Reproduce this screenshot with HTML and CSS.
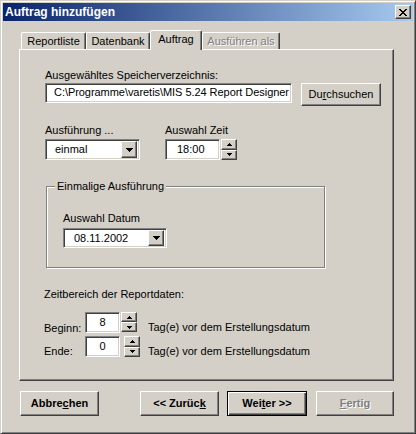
FILE: index.html
```html
<!DOCTYPE html>
<html>
<head>
<meta charset="utf-8">
<link rel="stylesheet" href="styles.css">
</head>
<body>
<div class="window">
  <div class="titlebar">
    <span class="title">Auftrag hinzufügen</span>
    <div class="close raised"><svg width="8" height="7" viewBox="0 0 8 7"><path d="M0 0h2v1h-2zM6 0h2v1h-2zM1 1h2v1h-2zM5 1h2v1h-2zM2 2h4v1h-4zM3 3h2v1h-2zM2 4h4v1h-4zM1 5h2v1h-2zM5 5h2v1h-2zM0 6h2v1h-2zM6 6h2v1h-2z" fill="#000"/></svg></div>
  </div>
  <div class="client">
    <div class="tabs">
      <div class="tab t1">Reportliste</div>
      <div class="tab t2">Datenbank</div>
      <div class="tab active t3">Auftrag</div>
      <div class="tab disabled t4">Ausführen als</div>
    </div>
    <div class="panel">
      <div class="label">Ausgewähltes Speicherverzeichnis:</div>
      <div class="path-row">
        <div class="field path">C:\Programme\varetis\MIS 5.24 Report Designer</div>
        <div class="btn browse">Du<u>r</u>chsuchen</div>
      </div>
      <div class="sched">
        <div class="label">Ausführung ...</div>
        <div class="label">Auswahl Zeit</div>
        <div class="field combo c-mode"><span>einmal</span><span class="dd raised"><svg width="7" height="4" viewBox="0 0 7 4"><path d="M0 0h7v1h-1v1h-1v1h-1v1h-1v-1h-1v-1h-1v-1h-1z" fill="#000"/></svg></span></div>
        <div class="timebox">
          <div class="field time">18:00</div>
          <div class="spin">
            <div class="sbtn raised up"><svg width="5" height="3" viewBox="0 0 5 3"><path d="M2 0h1v1h1v1h1v1h-5v-1h1v-1h1z" fill="#000"/></svg></div>
            <div class="sbtn raised down"><svg width="5" height="3" viewBox="0 0 5 3"><path d="M0 0h5v1h-1v1h-1v1h-1v-1h-1v-1h-1z" fill="#000"/></svg></div>
          </div>
        </div>
      </div>
      <fieldset class="group">
        <legend>Einmalige Ausführung</legend>
        <div class="label">Auswahl Datum</div>
        <div class="field combo c-date"><span>08.11.2002</span><span class="dd raised"><svg width="7" height="4" viewBox="0 0 7 4"><path d="M0 0h7v1h-1v1h-1v1h-1v1h-1v-1h-1v-1h-1v-1h-1z" fill="#000"/></svg></span></div>
      </fieldset>
      <div class="label range">Zeitbereich der Reportdaten:</div>
      <div class="num-row r1">
        <div class="nlabel">Beginn:</div>
        <div class="field num">8</div>
        <div class="spin nspin">
          <div class="sbtn raised up"><svg width="5" height="3" viewBox="0 0 5 3"><path d="M2 0h1v1h1v1h1v1h-5v-1h1v-1h1z" fill="#000"/></svg></div>
          <div class="sbtn raised down"><svg width="5" height="3" viewBox="0 0 5 3"><path d="M0 0h5v1h-1v1h-1v1h-1v-1h-1v-1h-1z" fill="#000"/></svg></div>
        </div>
        <div class="ntext">Tag(e) vor dem Erstellungsdatum</div>
      </div>
      <div class="num-row r2">
        <div class="nlabel">Ende:</div>
        <div class="field num">0</div>
        <div class="spin nspin">
          <div class="sbtn raised up"><svg width="5" height="3" viewBox="0 0 5 3"><path d="M2 0h1v1h1v1h1v1h-5v-1h1v-1h1z" fill="#000"/></svg></div>
          <div class="sbtn raised down"><svg width="5" height="3" viewBox="0 0 5 3"><path d="M0 0h5v1h-1v1h-1v1h-1v-1h-1v-1h-1z" fill="#000"/></svg></div>
        </div>
        <div class="ntext">Tag(e) vor dem Erstellungsdatum</div>
      </div>
    </div>
    <div class="buttons">
      <div class="btn pbtn b1">Abbre<u>c</u>hen</div>
      <div class="btn pbtn b2">&lt;&lt; Zurüc<u>k</u></div>
      <div class="btn pbtn b3 default">Wei<u>t</u>er &gt;&gt;</div>
      <div class="btn pbtn b4 disabled"><u>F</u>ertig</div>
    </div>
  </div>
</div>
</body>
</html>
```
FILE: styles.css
```css
* { box-sizing: border-box; }
body {
  margin: 0;
  background: #d4d0c8;
  font: 11px/13px "Liberation Sans", Arial, sans-serif;
  color: #000;
}
.window {
  width: 416px;
  height: 434px;
  border: 1px solid;
  border-color: #d4d0c8 #404040 #404040 #d4d0c8;
  box-shadow: inset 1px 1px #fff, inset -1px -1px #808080;
  padding: 2px;
  background: #d4d0c8;
}
.titlebar {
  height: 18px;
  display: flex;
  align-items: center;
  justify-content: space-between;
  padding: 0 2px;
  background: linear-gradient(to right, #0a246a, #a6caf0);
  color: #fff;
  font-weight: bold;
  font-size: 12px;
}
.raised {
  background: #d4d0c8;
  border: 1px solid;
  border-color: #fff #404040 #404040 #fff;
  box-shadow: inset -1px -1px #808080;
}
.close {
  width: 16px;
  height: 14px;
  display: flex;
  align-items: center;
  justify-content: center;
}
.close svg, .dd svg, .sbtn svg { display: block; }
.client { padding: 9px 19px 0 16px; }
.tabs {
  display: flex;
  align-items: flex-end;
  height: 19px;
  margin-left: 2px;
  position: relative;
  z-index: 1;
}
.tab {
  height: 17px;
  border: 1px solid #fff;
  border-bottom: 0;
  border-right-color: #404040;
  box-shadow: inset -1px 0 #808080;
  border-radius: 2px 2px 0 0;
  text-align: center;
  padding-top: 2px;
  background: #d4d0c8;
  white-space: nowrap;
}
.t1 { width: 65px; }
.t2 { width: 64px; }
.t3 { width: 52px; }
.t4 { width: 78px; }
.tab.active { height: 20px; margin-bottom: -1px; }
.disabled { color: #808080; text-shadow: 1px 1px #fff; }
.panel {
  height: 332px;
  border: 1px solid;
  border-color: #fff #404040 #404040 #fff;
  box-shadow: inset -1px -1px #808080;
  padding: 19px 0 0 25px;
}
.label { white-space: nowrap; }
.path-row { display: flex; align-items: flex-start; margin-top: 1px; }
.field {
  background: #fff;
  border: 1px solid;
  border-color: #808080 #fff #fff #808080;
  box-shadow: inset 1px 1px #404040, inset -1px -1px #d4d0c8;
  white-space: nowrap;
  overflow: hidden;
}
.path { width: 247px; height: 20px; padding: 2px 0 0 8px; letter-spacing: -0.05px; }
.btn {
  background: #d4d0c8;
  border: 1px solid;
  border-color: #fff #404040 #404040 #fff;
  box-shadow: inset -1px -1px #808080;
  text-align: center;
  white-space: nowrap;
}
.browse { width: 80px; height: 23px; margin-left: 9px; padding-top: 4px; }
.sched {
  display: grid;
  grid-template-columns: 120px auto;
  row-gap: 2px;
  margin-top: 18px;
}
.combo {
  display: flex;
  align-items: center;
  justify-content: space-between;
  padding: 2px 2px 2px 9px;
}
.c-mode { width: 95px; height: 21px; }
.dd {
  width: 16px;
  height: 17px;
  display: flex;
  align-items: center;
  justify-content: center;
}
.c-date .dd { height: 16px; }
.timebox { display: flex; }
.time { width: 55px; height: 21px; padding: 3px 0 0 11px; }
.spin { width: 16px; height: 21px; display: flex; flex-direction: column; margin-left: 1px; }
.sbtn { flex: 1; display: flex; align-items: center; justify-content: center; }
.group {
  margin: 20px 0 0 1px;
  width: 279px;
  border: 1px solid #808080;
  box-shadow: inset 1px 1px #fff, 1px 1px #fff;
  padding: 19px 0 19px 16px;
  min-width: 0;
}
.group legend {
  margin-left: -8px;
  padding: 0 2px;
  background: #d4d0c8;
  white-space: nowrap;
}
.c-date { width: 104px; height: 20px; margin-top: 3px; padding-left: 10px; }
.range { margin-top: 20px; margin-left: -1px; }
.num-row { display: flex; align-items: flex-start; height: 21px; }
.r1 { margin-top: 11px; }
.r2 { margin-top: 3px; }
.nlabel { width: 41px; margin-top: 9px; margin-left: -1px; }
.r1 .nlabel { margin-top: 10px; }
.num { width: 35px; height: 21px; text-align: center; padding-top: 3px; }
.r1 .nspin { height: 20px; margin-left: 1px; }
.r2 .nspin { margin-left: 4px; }
.ntext { margin-top: 9px; white-space: nowrap; }
.r1 .ntext { margin-left: 11px; }
.r2 .ntext { margin-left: 8px; }
.buttons { display: flex; margin-top: 10px; }
.pbtn { width: 79px; height: 25px; font-weight: bold; padding-top: 5px; }
.b1 { margin-left: 1px; }
.b2 { margin-left: 41px; }
.b3 { margin-left: 8px; width: 80px; }
.b4 { margin-left: 9px; width: 78px; }
.default {
  border: 1px solid #000;
  box-shadow: inset 1px 1px #fff, inset -1px -1px #404040, inset -2px -2px #808080;
}
```
